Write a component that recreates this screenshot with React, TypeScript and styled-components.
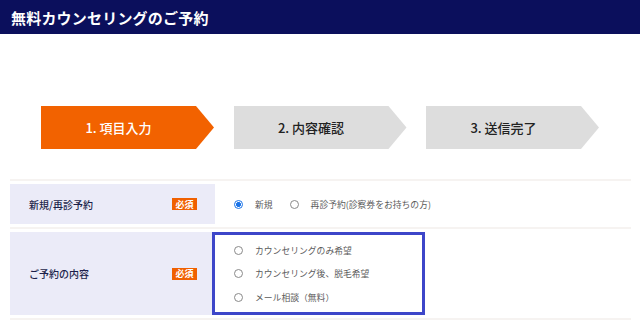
import React from "react";
import styled, { createGlobalStyle } from "styled-components";

const GlobalStyle = createGlobalStyle`
  body {
    margin: 0;
    background: #ffffff;
    font-family: "Noto Sans CJK JP", "Noto Sans", sans-serif;
  }
`;

const steps = ["1. 項目入力", "2. 内容確認", "3. 送信完了"];

const Radio = ({ label, checked }: { label: string; checked?: boolean }) => (
  <Option>
    <RadioInput type="radio" defaultChecked={checked} name={label} />
    <OptionText>{label}</OptionText>
  </Option>
);

const App = () => {
  return (
    <Page>
      <GlobalStyle />
      <Header>無料カウンセリングのご予約</Header>

      <Steps>
        {steps.map((s, i) => (
          <Step key={s} $active={i === 0}>
            {s}
          </Step>
        ))}
      </Steps>

      <FormTable>
        <Row>
          <Label>
            <LabelText>新規/再診予約</LabelText>
            <Badge>必須</Badge>
          </Label>
          <InlineOptions>
            <Radio label="新規" checked />
            <Radio label="再診予約(診察券をお持ちの方)" />
          </InlineOptions>
        </Row>
        <Row>
          <Label $tall>
            <LabelText>ご予約の内容</LabelText>
            <Badge>必須</Badge>
          </Label>
          <Highlight>
            <Radio label="カウンセリングのみ希望" />
            <Radio label="カウンセリング後、脱毛希望" />
            <Radio label="メール相談（無料）" />
          </Highlight>
        </Row>
      </FormTable>
    </Page>
  );
};

export default App;

const Page = styled.div`
  width: 640px;
  height: 321px;
  overflow: hidden;
`;

const Header = styled.h1`
  margin: 0;
  height: 34px;
  padding-left: 11px;
  display: flex;
  align-items: center;
  background: #0b0f5c;
  color: #ffffff;
  font-size: 15px;
  font-weight: 700;
  letter-spacing: 0.2px;
`;

const Steps = styled.ol`
  list-style: none;
  margin: 0;
  padding: 72px 0 0 41px;
  display: flex;
  gap: 19.5px;
`;

const Step = styled.li<{ $active?: boolean }>`
  width: 173px;
  height: 43px;
  box-sizing: border-box;
  padding-right: 18px;
  display: flex;
  align-items: center;
  justify-content: center;
  clip-path: polygon(0 0, calc(100% - 18px) 0, 100% 50%, calc(100% - 18px) 100%, 0 100%);
  background: ${(p) => (p.$active ? "#f26200" : "#dddddd")};
  color: ${(p) => (p.$active ? "#ffffff" : "#222222")};
  font-size: 13px;
  font-weight: 500;
`;

const FormTable = styled.div`
  margin: 30px 9px 0 10px;
  border-top: 2px solid #f6f3f1;
`;

const Row = styled.div`
  display: grid;
  grid-template-columns: 205px 1fr;
  padding: 3px 0;
  border-bottom: 2px solid #f6f3f1;
`;

const Label = styled.div<{ $tall?: boolean }>`
  height: ${(p) => (p.$tall ? "83px" : "40px")};
  background: #ebebf8;
  display: flex;
  align-items: center;
  justify-content: space-between;
  padding: 0 18px 0 19px;
`;

const LabelText = styled.span`
  font-size: 10px;
  font-weight: 500;
  color: #1c1f4a;
`;

const Badge = styled.span`
  display: inline-flex;
  align-items: center;
  justify-content: center;
  width: 25px;
  height: 12px;
  background: #f06000;
  color: #ffffff;
  font-size: 9px;
  font-weight: 700;
  line-height: 1;
`;

const InlineOptions = styled.div`
  display: flex;
  align-items: center;
  gap: 17px;
  padding-left: 19px;
`;

const Highlight = styled.div`
  width: 213px;
  margin-left: -3px;
  box-sizing: border-box;
  border: 3px solid #3d46c9;
  display: flex;
  flex-direction: column;
  justify-content: center;
  padding-left: 19px;

  & > label {
    height: 23.5px;
  }
`;

const Option = styled.label`
  display: flex;
  align-items: center;
  gap: 12px;
`;

const RadioInput = styled.input`
  appearance: none;
  margin: 0;
  width: 9px;
  height: 9px;
  border-radius: 50%;
  border: 1px solid #8a8a8a;
  box-sizing: border-box;
  background: #ffffff;

  &:checked {
    border-color: #1a73e8;
    background: radial-gradient(circle, #1a73e8 0 2.2px, #ffffff 2.6px);
  }
`;

const OptionText = styled.span`
  font-size: 8.8px;
  color: #5a5a5a;
`;
